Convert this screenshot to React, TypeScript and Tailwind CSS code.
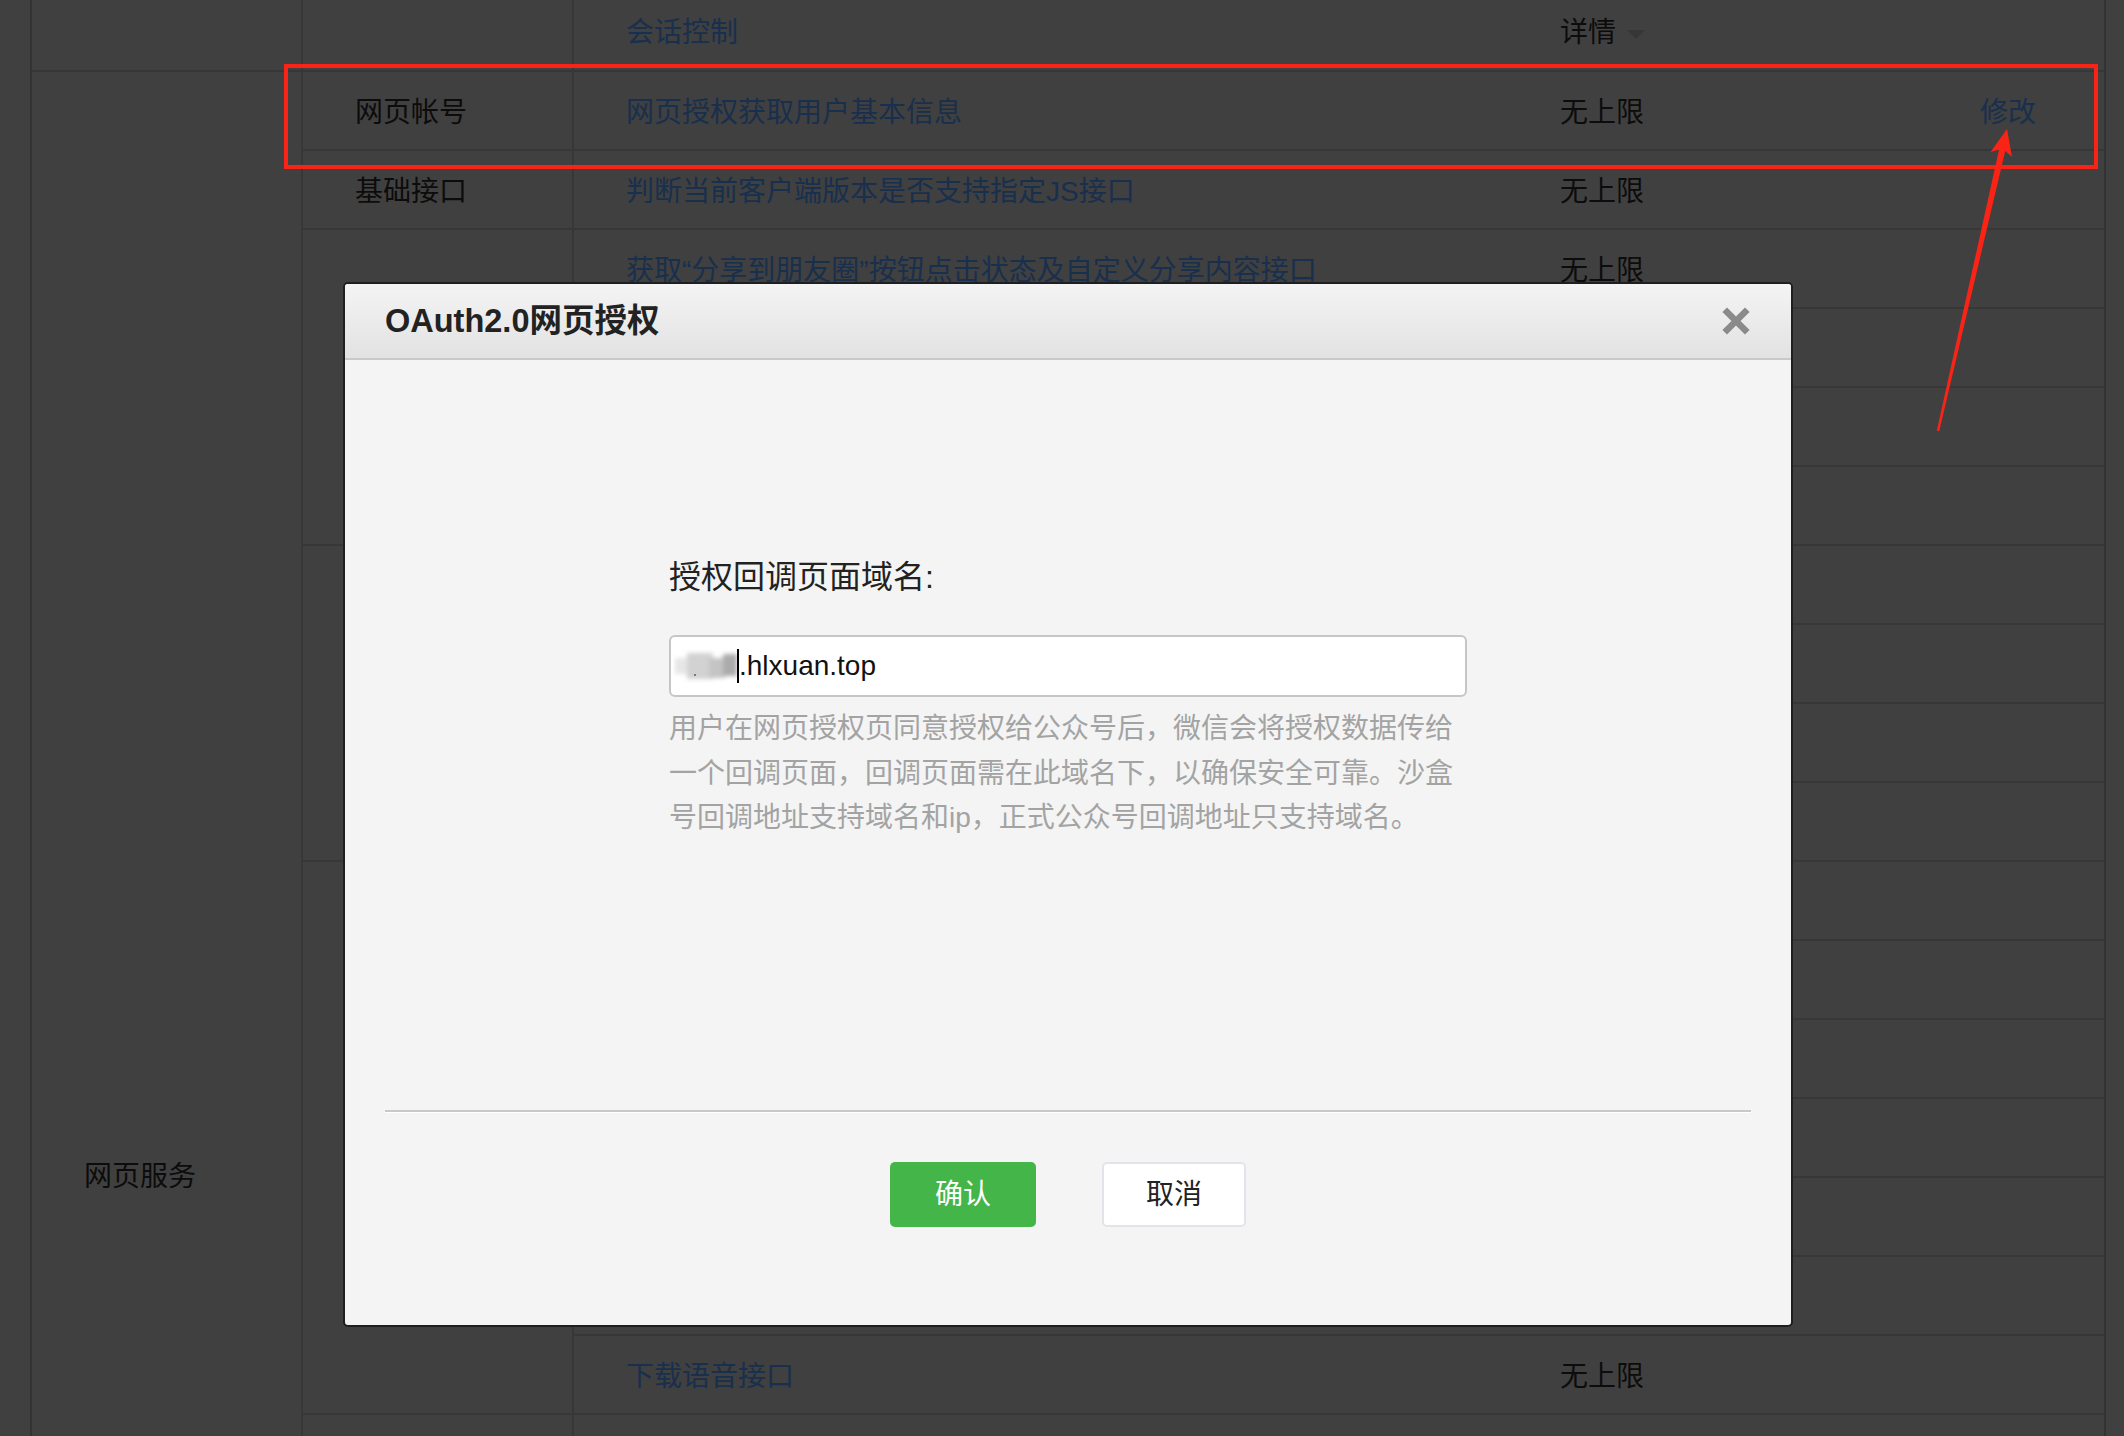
import React from "react";

// 表格数据（被遮罩压暗的底层页面）
interface Row {
  name: string;
  limit?: string;
  op?: string;
}

interface Group {
  label: string;
  rows: Row[];
}

const groups: Group[] = [
  { label: "网页帐号", rows: [{ name: "网页授权获取用户基本信息", limit: "无上限", op: "修改" }] },
  { label: "基础接口", rows: [{ name: "判断当前客户端版本是否支持指定JS接口", limit: "无上限" }] },
  {
    label: "分享接口",
    rows: [
      { name: "获取“分享到朋友圈”按钮点击状态及自定义分享内容接口", limit: "无上限" },
      { name: "获取“发送给朋友”按钮点击状态及自定义分享内容接口", limit: "无上限" },
      { name: "获取“分享到QQ”按钮点击状态及自定义分享内容接口", limit: "无上限" },
      { name: "获取“分享到腾讯微博”按钮点击状态及自定义分享内容接口", limit: "无上限" },
    ],
  },
  {
    label: "图像接口",
    rows: [
      { name: "拍照或从手机相册中选图接口", limit: "无上限" },
      { name: "预览图片接口", limit: "无上限" },
      { name: "上传图片接口", limit: "无上限" },
      { name: "下载图片接口", limit: "无上限" },
    ],
  },
  {
    label: "音频接口",
    rows: [
      { name: "开始录音接口", limit: "无上限" },
      { name: "停止录音接口", limit: "无上限" },
      { name: "播放语音接口", limit: "无上限" },
      { name: "暂停播放接口", limit: "无上限" },
      { name: "停止播放接口", limit: "无上限" },
      { name: "上传语音接口", limit: "无上限" },
      { name: "下载语音接口", limit: "无上限" },
    ],
  },
  // 下一组只露出一条边，文字在屏幕外
  { label: "", rows: [{ name: "" }] },
];

function TableRow({ row }: { row: Row }) {
  return (
    <div className="flex h-[79px] shrink-0 items-center border-b-2 border-[#373737] pt-[4px]">
      <div className="w-[934px] whitespace-nowrap pl-[52px] text-[#182f4d]">{row.name}</div>
      <div className="w-[420px] pl-[52px] text-[#0c0c0c]">{row.limit}</div>
      <div className="pl-[52px] text-[#182f4d]">{row.op}</div>
    </div>
  );
}

function Blurred() {
  // 打码的子域名
  return (
    <svg width="64" height="36" viewBox="0 0 64 36" className="shrink-0">
      <defs>
        <filter id="mosaic" x="-20%" y="-20%" width="140%" height="140%">
          <feGaussianBlur stdDeviation="2" />
        </filter>
      </defs>
      <g filter="url(#mosaic)">
        <rect x="2" y="10" width="18" height="16" fill="#e6e6e6" />
        <rect x="14" y="5" width="26" height="26" fill="#d2d2d2" />
        <rect x="36" y="10" width="16" height="20" fill="#c4c4c4" />
        <rect x="50" y="6" width="14" height="22" fill="#ababab" />
      </g>
      <rect x="21" y="26" width="2" height="2" fill="#7a7a7a" />
    </svg>
  );
}

export default function App() {
  return (
    <div className="relative h-[1436px] w-[2124px] overflow-hidden bg-[#404040] font-['Liberation_Sans','Noto_Sans_CJK_SC',sans-serif] text-[28px] leading-[40px]">
      {/* 底层表格 */}
      <div className="ml-[30px] w-[2076px] border-x-2 border-[#333333]">
        <div className="flex h-[72px] border-b-2 border-[#373737]">
          <div className="w-[269px]" />
          <div className="w-[271px] border-l-2 border-[#373737]" />
          <div className="flex flex-1 items-center border-l-2 border-[#373737] pb-[4px]">
            <div className="w-[934px] pl-[52px] text-[#182f4d]">会话控制</div>
            <div className="flex items-center pl-[52px] text-[#0c0c0c]">
              详情
              <span className="ml-[11px] mt-[3px] h-0 w-0 border-x-[9px] border-t-[9px] border-x-transparent border-t-[#363636]" />
            </div>
          </div>
        </div>

        <div className="flex">
          <div className="w-[269px] pl-[52px] pt-[1085px] text-[#0c0c0c]">网页服务</div>
          <div className="flex flex-1 flex-col">
            {groups.map((g, i) => (
              <div key={i} className="flex">
                <div className="flex w-[271px] items-center border-b-2 border-l-2 border-[#373737] pl-[52px] pt-[4px] text-[#0c0c0c]">
                  {g.label}
                </div>
                <div className="flex flex-1 flex-col border-l-2 border-[#373737]">
                  {g.rows.map((r, j) => (
                    <TableRow key={j} row={r} />
                  ))}
                </div>
              </div>
            ))}
          </div>
        </div>
      </div>

      {/* 标注：红框与箭头 */}
      <div className="pointer-events-none absolute left-[284px] top-[64px] h-[105px] w-[1814px] border-4 border-[#f92416]" />
      <svg className="pointer-events-none absolute left-0 top-0" width="2124" height="1436" viewBox="0 0 2124 1436">
        <polygon
          fill="#f92416"
          points="1936.8,430.7 1999.0,149.7 1990.5,151.9 2007,129 2011.9,156.8 2005.2,151.1 1939.2,431.3"
        />
      </svg>

      {/* 弹窗 */}
      <div className="absolute left-[343px] top-[282px] flex h-[1045px] w-[1450px] flex-col overflow-hidden rounded-[5px] border-2 border-[#1f1f1f] bg-[#f4f4f4]">
        <div className="flex h-[76px] shrink-0 items-center justify-between border-b-2 border-[#c9c9c9] bg-gradient-to-b from-[#f4f4f4] to-[#e2e2e2] pl-[40px] pr-[41px]">
          <h2 className="text-[32.5px] font-bold text-[#222222]">OAuth2.0网页授权</h2>
          <svg width="28" height="28" viewBox="0 0 28 28">
            <path d="M5 5 L23 23 M23 5 L5 23" stroke="#8a8a8a" strokeWidth="6.5" strokeLinecap="square" />
          </svg>
        </div>

        <div className="h-[750px] shrink-0 pl-[324px] pt-[195px]">
          <div className="text-[32px] leading-[44px] text-[#222222]">授权回调页面域名:</div>
          <div className="mt-[36px] flex h-[62px] w-[798px] items-center rounded-[6px] border-2 border-[#c6c6c6] bg-white pl-[2px]">
            <Blurred />
            <span className="h-[34px] w-[2px] bg-black" />
            <span className="text-[28px] text-[#111111]">.hlxuan.top</span>
          </div>
          <div className="mt-[10px] w-[798px] text-[28px] leading-[44.5px] text-[#a3a3a3]">
            <p className="whitespace-nowrap">用户在网页授权页同意授权给公众号后，微信会将授权数据传给</p>
            <p className="whitespace-nowrap">一个回调页面，回调页面需在此域名下，以确保安全可靠。沙盒</p>
            <p className="whitespace-nowrap">号回调地址支持域名和ip，正式公众号回调地址只支持域名。</p>
          </div>
        </div>

        <div className="mx-[40px] shrink-0 border-b border-t-2 border-b-white border-t-[#c9c9c9]" />

        <div className="flex justify-center gap-[66px] pt-[49px]">
          <button className="h-[65px] w-[146px] rounded-[5px] bg-[#44b549] text-[28px] text-white">确认</button>
          <button className="h-[65px] w-[144px] rounded-[5px] border-2 border-[#e1e4e8] bg-white text-[28px] text-[#222222]">
            取消
          </button>
        </div>
      </div>
    </div>
  );
}
